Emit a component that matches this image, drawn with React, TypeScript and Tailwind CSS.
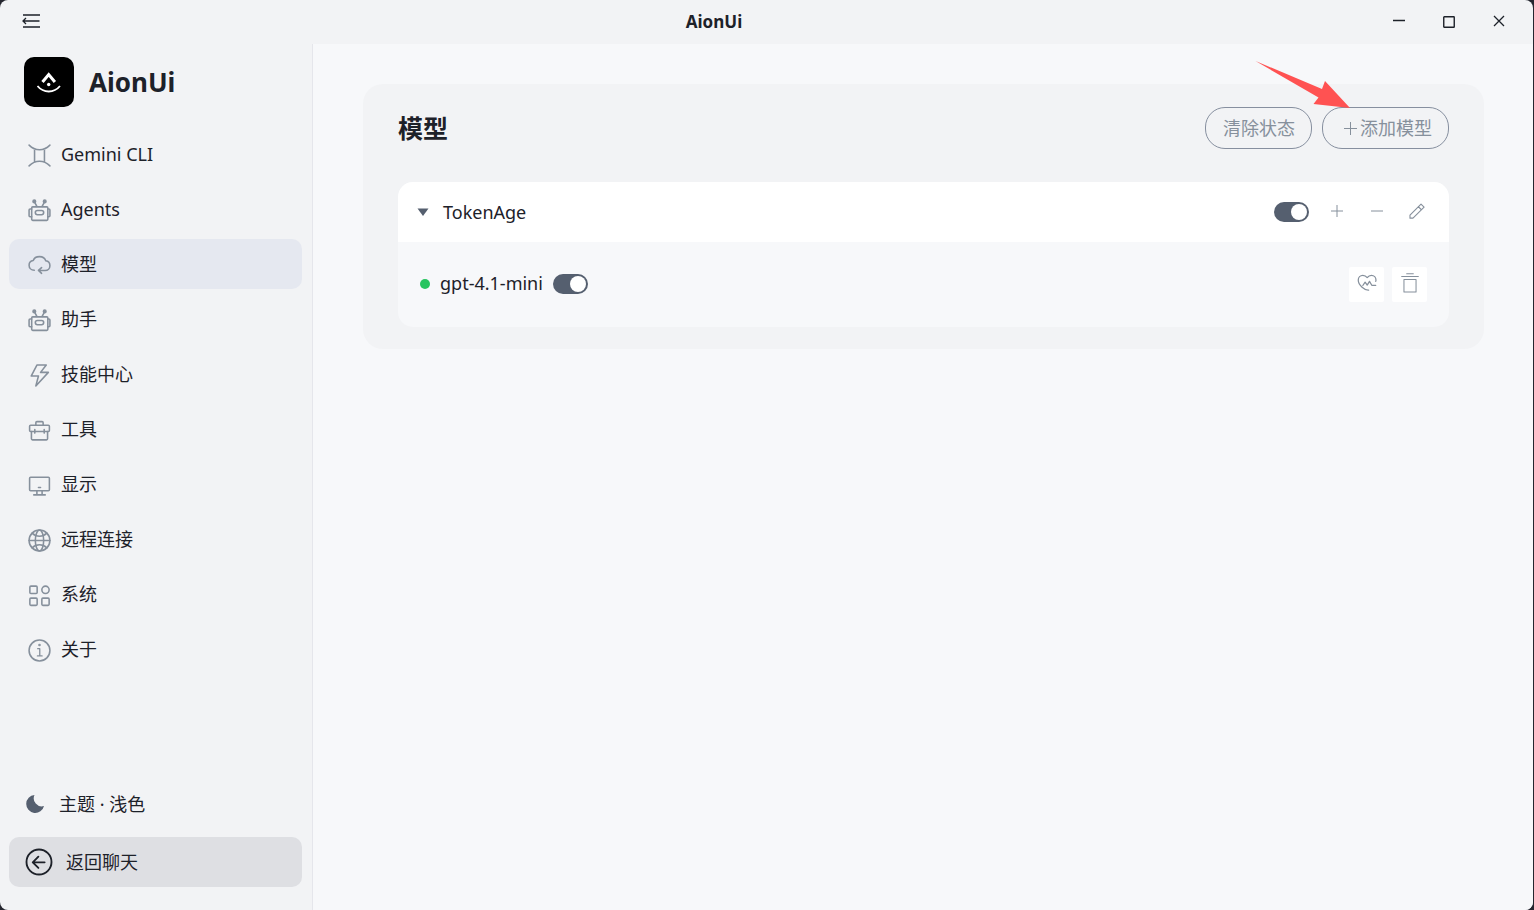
import { useState } from 'react';
import type { ReactNode } from 'react';
import { clsx } from 'clsx';

interface IconProps {
    children: ReactNode;
    className?: string;
    strokeWidth?: number;
}

function Icon({ children, className = 'size-[25px]', strokeWidth = 3 }: IconProps) {
    return (
        <svg
            viewBox="0 0 48 48"
            fill="none"
            stroke="currentColor"
            strokeWidth={strokeWidth}
            strokeLinecap="round"
            strokeLinejoin="round"
            aria-hidden="true"
            className={clsx('shrink-0', className)}
        >
            {children}
        </svg>
    );
}

const robotIcon = (
    <>
        <rect x="9" y="17" width="31" height="26" rx="2" />
        <path d="M9 21H6a2 2 0 0 0-2 2v11a2 2 0 0 0 2 2h3M40 21h2a2 2 0 0 1 2 2v11a2 2 0 0 1-2 2h-2" />
        <rect x="16" y="24" width="16" height="8" rx="4" />
        <path d="M14 7l5 9M34 7l-5 9" />
        <circle cx="14" cy="6.500" r="2.500" fill="currentColor" />
        <circle cx="34" cy="6.500" r="2.500" fill="currentColor" />
    </>
);

const navItems: { label: string; icon: ReactNode }[] = [
    {
        label: 'Gemini CLI',
        icon: (
            <path d="M4 4c5 5 12 9 20 9s15-4 20-9M4 44c5-5 12-9 20-9s15 4 20 9M14.500 11.500v25M33.500 11.500v25" />
        ),
    },
    { label: 'Agents', icon: robotIcon },
    {
        label: '模型',
        icon: (
            <path d="M14 33C8 33 4 29 4 23.500C4 18.500 7.500 15 12 14.500C13.500 10 18 7 24 7s10.500 3 12 8c5 .5 8 4.500 8 9.500c0 5-4 9-9 9H23M28 28l-6 5.500l6 5.500" />
        ),
    },
    { label: '助手', icon: robotIcon },
    { label: '技能中心', icon: <path d="M19 4H37L26 18H41L17 44L22 25H8L19 4Z" /> },
    {
        label: '工具',
        icon: (
            <>
                <rect x="5" y="14" width="38" height="12" rx="2" />
                <path d="M8.500 26v14a2 2 0 0 0 2 2h27a2 2 0 0 0 2-2V26M17 13V9a2 2 0 0 1 2-2h10a2 2 0 0 1 2 2v4M15 22v7M33 22v7" />
            </>
        ),
    },
    {
        label: '显示',
        icon: (
            <>
                <rect x="5" y="8" width="38" height="26" rx="2" />
                <path d="M19 34v8M29 34v8M13 42h22M22 28h4" />
            </>
        ),
    },
    {
        label: '远程连接',
        icon: (
            <>
                <circle cx="24" cy="24" r="20" />
                <ellipse cx="24" cy="24" rx="8" ry="20" />
                <path d="M4 24h40M9.800 9.900C13.400 13.500 18.400 15.700 24 15.700s10.500-2.200 14.100-5.800M9.800 38.100C13.400 34.500 18.400 32.300 24 32.300s10.500 2.200 14.100 5.800" />
            </>
        ),
    },
    {
        label: '系统',
        icon: (
            <>
                <rect x="5.500" y="6" width="14" height="14" rx="2" />
                <circle cx="35.500" cy="13" r="7" />
                <rect x="5.500" y="29" width="14" height="14" rx="2" />
                <rect x="28.500" y="29" width="14" height="14" rx="2" />
            </>
        ),
    },
    {
        label: '关于',
        icon: (
            <>
                <circle cx="24" cy="24" r="20" />
                <path d="M20.500 20.500h4V34.500M20 34.500h9" strokeWidth="2.500" />
                <circle cx="24" cy="13.500" r="1" fill="currentColor" />
            </>
        ),
    },
];

function TitleBar() {
    return (
        <header className="flex h-11 items-center pr-[9px] pl-2">
            <button type="button" aria-label="Collapse sidebar" className="flex h-10 w-[46px] items-center justify-center pb-0.5">
                <svg viewBox="0 0 18 14" fill="none" stroke="currentColor" strokeWidth="1.3" className="h-3.5 w-[18px]">
                    <path d="M1 1h17M1 7h16.500M1 13h17M4 4L1 7l3 3" />
                </svg>
            </button>
            <h1 className="flex-1 text-center font-['Noto_Sans'] text-[17px] font-bold">AionUi</h1>
            <div className="flex">
                <button type="button" aria-label="Minimize" className="flex h-10 w-[50px] items-center justify-center pb-0.5">
                    <svg viewBox="0 0 12 12" stroke="currentColor" strokeWidth="1.5" className="size-3">
                        <path d="M0 5.500h12" />
                    </svg>
                </button>
                <button type="button" aria-label="Maximize" className="flex h-10 w-[50px] items-center justify-center">
                    <svg viewBox="0 0 12 12" fill="none" stroke="currentColor" strokeWidth="1.4" className="size-3">
                        <rect x="0.750" y="0.750" width="10.500" height="10.500" rx="0.500" />
                    </svg>
                </button>
                <button type="button" aria-label="Close" className="flex h-10 w-[50px] items-center justify-center pb-0.5">
                    <svg viewBox="0 0 12 12" stroke="currentColor" strokeWidth="1.3" className="size-3">
                        <path d="M1 1l10 10M11 1l-10 10" />
                    </svg>
                </button>
            </div>
        </header>
    );
}

function Sidebar() {
    const [active, setActive] = useState('模型');

    return (
        <aside className="flex w-[313px] shrink-0 flex-col border-r border-[#e5e6eb] pt-[13px] pr-2.5 pb-[23px] pl-[9px]">
            <div className="mb-[22px] flex items-center gap-[15px] pl-[15px]">
                <svg viewBox="0 0 50 50" fill="none" stroke="#fff" className="size-[50px] rounded-[10px] bg-black" aria-hidden="true">
                    <path d="M18.500 25L24.700 17.500l6.200 7.500" strokeWidth="3" />
                    <circle cx="24.700" cy="27.500" r="1.700" fill="#fff" stroke="none" />
                    <path d="M13.500 29c6 7.300 16.500 7.300 22.500 0" strokeWidth="1.800" />
                </svg>
                <span className="font-['Noto_Sans'] text-[26px] leading-8 font-bold">AionUi</span>
            </div>

            <nav className="flex flex-1 flex-col gap-[5px]">
                {navItems.map((item) => (
                    <button
                        key={item.label}
                        type="button"
                        onClick={() => setActive(item.label)}
                        className={clsx(
                            'flex h-[50px] items-center gap-[9px] rounded-[10px] pl-[18px] text-left',
                            active === item.label && 'bg-[#e5e8f0]'
                        )}
                    >
                        <Icon className="mt-0.5 size-[25px] text-[#86909c]">{item.icon}</Icon>
                        {item.label}
                    </button>
                ))}
            </nav>

            <div className="flex flex-col gap-2">
                <button type="button" className="flex h-[50px] items-center gap-[15px] rounded-[10px] pl-[17px] text-left">
                    <svg viewBox="0 0 18 18" className="size-[18px] fill-[#555f6f]" aria-hidden="true">
                        <path d="M8.500 0A9 9 0 1 0 18 11A8 8 0 0 1 8.500 0Z" />
                    </svg>
                    主题 · 浅色
                </button>
                <button type="button" className="flex h-[50px] items-center gap-3 rounded-[10px] bg-[#dedfe3] pl-[15px] text-left">
                    <Icon className="size-[30px]">
                        <circle cx="24" cy="24" r="20" />
                        <path d="M33 24.500H15M23 15.500l-9 9l9 9" />
                    </Icon>
                    返回聊天
                </button>
            </div>
        </aside>
    );
}

function Switch({ label }: { label: string }) {
    return (
        <input
            type="checkbox"
            role="switch"
            aria-label={label}
            defaultChecked
            className="flex h-5 w-[35px] shrink-0 appearance-none items-center rounded-full bg-[#c9cdd4] px-0.5 before:size-4 before:rounded-full before:bg-white checked:justify-end checked:bg-[#555f6f]"
        />
    );
}

function ProviderCard() {
    return (
        <div className="overflow-hidden rounded-[15px] bg-[#f7f8fa]">
            <div className="flex h-[60px] items-center bg-white pr-[17px] pl-[19px]">
                <button type="button" aria-expanded="true" className="flex items-center gap-3.5">
                    <svg viewBox="0 0 12 8" className="h-2 w-3 fill-[#555f6f]" aria-hidden="true">
                        <path d="M0.500 0.500h11L6 8Z" />
                    </svg>
                    TokenAge
                </button>
                <div className="ml-auto flex items-center gap-2.5 text-[#86909c]">
                    <Switch label="TokenAge" />
                    <button type="button" aria-label="Add model to TokenAge" className="ml-[3px] flex size-[30px] items-center justify-center">
                        <svg viewBox="0 0 12 12" stroke="currentColor" className="mb-0.5 size-3">
                            <path d="M0 6h12M6 0v12" />
                        </svg>
                    </button>
                    <button type="button" aria-label="Remove TokenAge" className="flex size-[30px] items-center justify-center">
                        <svg viewBox="0 0 12 12" stroke="currentColor" className="mb-0.5 size-3">
                            <path d="M0 6h12" />
                        </svg>
                    </button>
                    <button type="button" aria-label="Edit TokenAge" className="flex size-[30px] items-center justify-center">
                        <Icon className="mb-0.5 size-[18px]">
                            <path d="M5.300 43h8L42.900 13.800L34.700 5.500L5.300 35v8ZM27.500 12.500l8.200 8.200" />
                        </Icon>
                    </button>
                </div>
            </div>
            <div className="flex items-center px-[22px] pt-[25px] pb-[25px]">
                <div className="flex items-center gap-2.5 pb-px">
                    <span className="size-2.5 rounded-full bg-[#27c45f]" />
                    <span className="pb-0.5">gpt-4.1-mini</span>
                    <Switch label="gpt-4.1-mini" />
                </div>
                <div className="ml-auto flex gap-2 text-[#86909c]">
                    <button type="button" aria-label="Health check" className="flex size-[35px] items-center justify-center rounded-xs bg-white">
                        <Icon className="mb-1 size-5">
                            <path d="M28 41C19 42 3 30 3 17C3 10.500 8 5.500 14 5.500c4.200 0 8 2.200 10.500 5.500C27 7.700 30.500 5.500 34.500 5.500c6.500 0 11 5 11 11c0 1.500-.2 2.500-.5 3.500M14 30l5.500-8l5 7l5.500-9l5.500 9.500H45" />
                        </Icon>
                    </button>
                    <button type="button" aria-label="Delete model" className="flex size-[35px] items-center justify-center rounded-xs bg-white">
                        <Icon className="mb-1 size-5" strokeWidth={2.5}>
                            <path d="M4 8.500h40M16 2h16M9.500 15.500h29v30h-29z" />
                        </Icon>
                    </button>
                </div>
            </div>
        </div>
    );
}

export default function App() {
    return (
        <div className="min-h-screen bg-[#25262f] pr-px">
            <div className="flex min-h-screen flex-col overflow-hidden rounded-lg bg-[#f2f3f5] font-['Noto_Sans','Noto_Sans_CJK_SC',sans-serif] text-lg leading-6 font-normal text-[#1d2129]">
                <TitleBar />
                <div className="flex flex-1">
                    <Sidebar />
                    <main className="min-w-0 flex-1 bg-[#f7f8fa] pt-10 pr-[49px] pl-[50px]">
                        <section className="rounded-[20px] bg-[#f2f3f5] px-[35px] pt-[23px] pb-[22px]">
                            <div className="mb-[33px] flex items-center justify-between">
                                <h2 className="text-[25px] leading-8 font-bold">模型</h2>
                                <div className="flex gap-2.5 text-[#86909c]">
                                    <button type="button" className="h-[42px] rounded-[20px] border border-[#868f9f] pr-4 pl-[17px]">
                                        清除状态
                                    </button>
                                    <div className="relative">
                                        <button type="button" className="flex h-[42px] items-center gap-[3px] rounded-[20px] border border-[#868f9f] pr-4 pl-[21px]">
                                            <svg viewBox="0 0 13 13" stroke="currentColor" className="size-[13px]" aria-hidden="true">
                                                <path d="M0 6.500h13M6.500 0v13" />
                                            </svg>
                                            添加模型
                                        </button>
                                        {/* Pointer to the add button */}
                                        <svg
                                            viewBox="0 0 95 48"
                                            className="pointer-events-none absolute right-[99px] bottom-[41px] h-12 w-[95px] fill-[#ff5252]"
                                            aria-hidden="true"
                                        >
                                            <path d="M0.500 1L67 29L70 21L95 48L58.500 44L63.500 37.500Z" />
                                        </svg>
                                    </div>
                                </div>
                            </div>
                            <ProviderCard />
                        </section>
                    </main>
                </div>
            </div>
        </div>
    );
}
